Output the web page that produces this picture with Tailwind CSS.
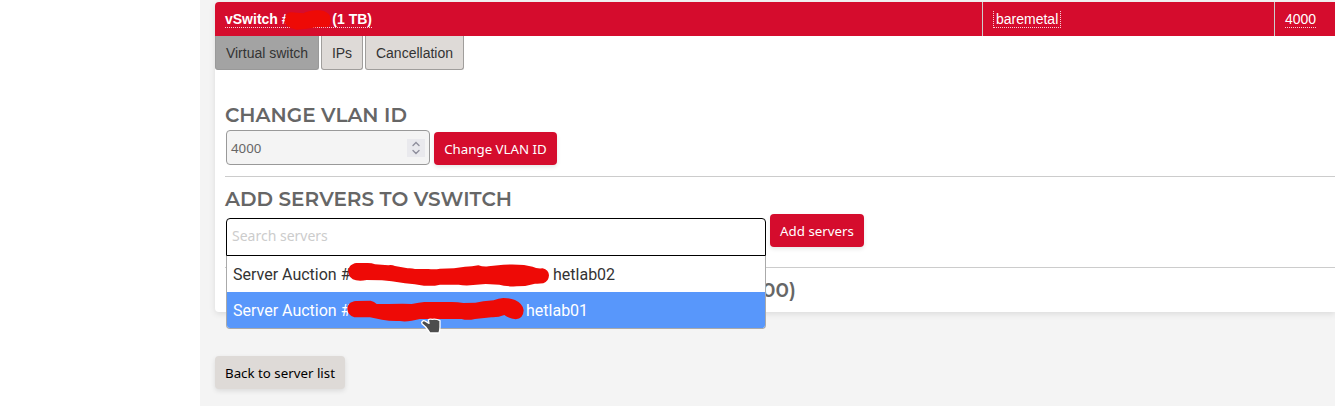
<!DOCTYPE html>
<html lang="en"><head><meta charset="utf-8"><title>vSwitch</title>
<script src="https://cdn.jsdelivr.net/npm/@tailwindcss/browser@4"></script></head>
<body class="h-[406px] overflow-hidden bg-white pl-[200px] font-['Liberation_Sans',sans-serif] text-[#333]">
<main class="h-[406px] bg-[#f4f4f4] pt-[2px] pl-[15px]">
<section class="relative h-[310px] rounded-l-[4px] bg-white shadow-[0_2px_6px_rgba(0,0,0,0.1)]">
<header class="flex h-[34px] rounded-tl-[4px] bg-[#d50c2d] text-[14px] leading-[16px] text-white">
<div class="relative w-[768px] shrink-0 border-r border-[#ccc] pt-[9px] pl-[10px] font-bold"><span class="inline-flex h-[17px] w-[147px] justify-between border-b border-dotted border-white/80"><span>vSwitch #</span><span>(1 TB)</span></span>
<svg class="absolute top-[3px] left-[60px]" width="70" height="30" viewBox="0 0 210 90" fill="#ee0a06"><path d="M34 29Q38 22 48 22L85 25Q100 17 125 16Q148 15 160 26Q168 33 167 48Q165 65 155 67L128 66L95 71L65 74Q48 72 38 64Q28 56 29 44Z"/></svg></div>
<div class="w-[292px] shrink-0 border-r border-[#ccc] pt-[9px] pl-[10px]"><span class="inline-block h-[17px] w-[68px] border-x border-b border-dotted border-white/80 pl-[2px]">baremetal</span></div>
<div class="pt-[9px] pl-[10px]"><span class="inline-block h-[17px] border-b border-dotted border-white/80">4000</span></div>
</header>
<nav class="flex h-[34px] gap-[2px] text-center text-[14px] leading-[34px]">
<div class="w-[104px] rounded-b-[3px] border border-t-0 border-[#999] bg-[#a3a3a3]">Virtual switch</div>
<div class="w-[42px] rounded-b-[3px] border border-t-0 border-[#a09e9c] bg-[#dedad7]">IPs</div>
<div class="w-[99px] rounded-b-[3px] border border-t-0 border-[#a09e9c] bg-[#dedad7]">Cancellation</div>
</nav>
<div class="pl-[10px]">
<div class="h-[107px] border-b border-[#ccc] pt-[33px]">
<h2 class="h-[27px] font-['Montserrat','Inter',sans-serif] text-[20px] leading-[24px] font-semibold whitespace-nowrap text-[#666]">CHANGE VLAN ID</h2>
<div class="flex font-['Noto_Sans',sans-serif]">
<div class="ml-px flex h-[35px] w-[204px] items-center justify-between rounded-[4px] border border-[#999] bg-[#f4f4f4] pr-[4px] pl-[4px] text-[13.3px] text-[#666]"><span class="pt-[2px]">4000</span>
<svg width="18" height="18" viewBox="0 0 18 18" class="bg-[#e9e9ed]" fill="none" stroke="#8f8f9d" stroke-width="1.4" stroke-linecap="round"><path d="M6 6.5l3-3 3 3M6 11.5l3 3 3-3"/></svg></div>
<button class="mt-[2px] ml-[4px] h-[33px] w-[123px] rounded-[4px] bg-[#d50c2d] pt-[2px] text-[13.3px] whitespace-nowrap text-white shadow-[0_2px_4px_rgba(0,0,0,0.1)]">Change VLAN ID</button>
</div></div>
<div class="h-[91px] border-b border-[#ccc] pt-[10px]">
<h2 class="h-[27px] font-['Montserrat','Inter',sans-serif] text-[20px] leading-[24px] font-semibold whitespace-nowrap text-[#666]">ADD SERVERS TO VSWITCH</h2>
<div class="flex font-['Noto_Sans',sans-serif]">
<div class="mt-[4px] ml-px h-[38px] w-[540px] rounded-t-[4px] border border-black bg-white pl-[5px] text-[14px] leading-[33px] text-[#ccc]">Search servers</div>
<button class="ml-[4px] h-[33px] w-[94px] rounded-[4px] bg-[#d50c2d] pt-[2px] text-[13.3px] whitespace-nowrap text-white shadow-[0_2px_4px_rgba(0,0,0,0.1)]">Add servers</button>
</div></div>
<h2 class="pt-[10px] pl-[537px] font-['Montserrat','Inter',sans-serif] text-[20px] leading-[24px] font-semibold text-[#666]">00)</h2>
</div>
<div class="absolute top-[254px] left-[11px] h-[73px] w-[540px] rounded-b-[4px] border border-t-0 border-[#aaa] bg-white font-['Roboto',sans-serif] text-[16px] leading-[38px]">
<div class="flex h-[36px] pl-[6px]"><span class="w-[320px]">Server Auction #</span><span>hetlab02</span></div>
<div class="flex h-[36px] rounded-b-[3px] bg-[#5897fb] pl-[6px] text-white"><span class="w-[293px]">Server Auction #</span><span>hetlab01</span></div>
<svg class="absolute top-0 left-[-1px]" width="540" height="84">
<g transform="translate(114 0) scale(.33333)">
<g fill="#ee0a06">
<path d="M25 47C25 31 35 23 49 21L83 21Q96 21 105 25L145 28Q155 26 165 30L203 37Q215 36 225 39L265 39Q285 41 300 38L342 37L375 32Q397 32 415 28Q430 33 445 31L490 26Q525 24 552 27L578 32Q590 39 608 37Q626 42 627 58Q626 77 610 82Q595 84 585 83Q560 91 530 91Q495 92 478 86L437 84L390 88Q370 89 356 86L300 86Q280 91 252 89Q225 84 195 82L155 76L126 73L80 72Q62 76 48 73Q26 68 25 47Z"/>
<path d="M22 160C22 145 31 137 48 135L92 134Q103 136 110 144L145 144L187 143L215 144Q238 140 253 138L325 138Q350 137 370 141L406 140L430 136L461 133Q475 127 490 126Q510 126 525 132Q549 143 551 163Q550 188 527 190Q507 188 493 177Q475 185 454 184L405 189Q382 194 365 189L240 189L215 194Q195 198 180 195Q150 196 126 191L90 184L43 184Q23 178 22 160Z"/>
</g>
<path d="M245 199Q249 191 257 196L267 202L265 192Q268 188 277 190Q289 188 300 194L300 213Q300 220 297 231L270 231Q264 222 257 213L246 203Z" fill="#4d4d4d" stroke="#fff" stroke-width="4" stroke-linejoin="round"/>
</g></svg></div>
</section>
<button class="mt-[44px] h-[33px] w-[130px] rounded-[4px] bg-[#dedad7] pt-[2px] font-['Noto_Sans',sans-serif] text-[13.3px] text-black shadow-[0_2px_5px_rgba(0,0,0,0.1)]">Back to server list</button>
</main></body></html>
